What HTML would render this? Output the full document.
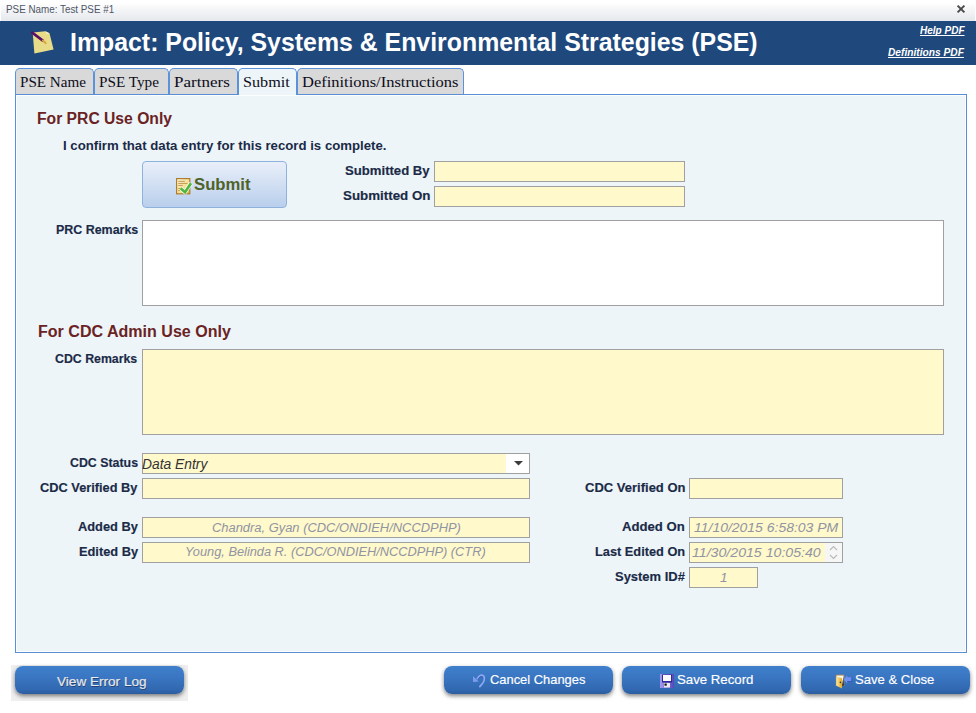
<!DOCTYPE html>
<html><head><meta charset="utf-8">
<style>
*{box-sizing:border-box;margin:0;padding:0}
html,body{width:976px;height:713px;overflow:hidden;background:#fff;font-family:"Liberation Sans",sans-serif}
.a{position:absolute}
.t{position:absolute;white-space:nowrap;transform-origin:0 0}
#titlebar{left:1px;top:0;width:974px;height:21px;background:linear-gradient(#fff 0,#fff 3px,#fafafb 6px,#e6e9ed 20px)}
#hdr{left:0;top:21px;width:976px;height:44px;background:#1f497d}
.tab{top:68px;height:26px;background:#d9d9d9;border:1px solid #5a93da;border-bottom:none;border-radius:5px 5px 0 0}
.tab.sel{background:#edf5f9;height:27px;z-index:3}
#panel{left:15px;top:94px;width:952px;height:559px;background:#edf5f9;border:1px solid #5b8fd3;box-shadow:inset 0 0 0 1px rgba(255,255,255,.75)}
.box{background:#fff9cc;border:1px solid #a0a0a0}
.btn{top:666px;height:28px;width:169px;border-radius:8px;background:linear-gradient(#3f7fcc 0,#3a76c2 40%,#3168b0 85%,#2b5c9e 100%);box-shadow:0 2px 4px rgba(0,0,0,.5)}
</style></head><body>
<div id="titlebar" class="a"></div>
<svg class="a" style="left:956px;top:4px" width="10" height="10" viewBox="0 0 10 10"><path d="M1.6 1.6L8.4 8.4M8.4 1.6L1.6 8.4" stroke="#4a4a4a" stroke-width="2"/></svg>

<div id="hdr" class="a"></div>
<svg class="a" style="left:30px;top:30px" width="26" height="26" viewBox="0 0 26 26">
  <path d="M2.7 2.6 L15.3 1.3 L19.5 3.3 L23.6 19.4 L4.4 23.6 Z" fill="#e9dc88"/>
  <path d="M15.3 1.3 L19.5 3.3 L16.5 4.2 Z" fill="#f4ecc0"/>
  <path d="M2.2 2.6 L12.8 10.6" stroke="#5a1068" stroke-width="2.6" stroke-linecap="round"/>
  <path d="M12.8 10.6 L15.8 13.2" stroke="#d9a540" stroke-width="2" stroke-linecap="round"/>
</svg>

<div id="panel" class="a"></div>
<div class="a tab" style="left:15px;width:79px"></div>
<div class="a tab" style="left:94px;width:75px"></div>
<div class="a tab" style="left:169px;width:69px"></div>
<div class="a tab sel" style="left:238px;width:59px"></div>
<div class="a tab" style="left:297px;width:167px"></div>

<div class="a" style="left:142px;top:161px;width:145px;height:47px;border:1px solid #8eb1de;border-radius:4px;background:linear-gradient(#e9eff9,#b9cfec)"></div>
<svg class="a" style="left:176px;top:178px" width="17" height="17" viewBox="0 0 17 17">
  <defs><linearGradient id="doc" x1="0" y1="0" x2="1" y2="1"><stop offset="0" stop-color="#fffbe6"/><stop offset=".6" stop-color="#f8dc90"/><stop offset="1" stop-color="#e0a838"/></linearGradient></defs>
  <rect x="0.6" y="0.6" width="13.2" height="15.2" fill="url(#doc)" stroke="#ad7d2a" stroke-width="1.2"/>
  <path d="M2.2 3.3h6.6M2.2 5.4h9.3M2.2 7.4h4.6M2.2 10.5h2M2.2 12.5h2" stroke="#c09a50" stroke-width="1"/>
  <path d="M4.6 10.3 L9 14.2 L15 5.2" stroke="#fff" stroke-width="4.2" fill="none" stroke-linejoin="round"/>
  <path d="M4.6 10.3 L9 14.2 L15 5.2" stroke="#4fb83c" stroke-width="2.8" fill="none"/>
</svg>

<div class="a box" style="left:434px;top:161px;width:251px;height:21px"></div>
<div class="a box" style="left:434px;top:186px;width:251px;height:21px"></div>
<div class="a box" style="left:142px;top:220px;width:802px;height:86px;background:#fff"></div>
<div class="a box" style="left:142px;top:349px;width:802px;height:86px"></div>

<div class="a box" style="left:142px;top:453px;width:388px;height:21px"></div>
<div class="a" style="left:506px;top:454px;width:23px;height:19px;background:#fff"></div>
<svg class="a" style="left:514px;top:461px" width="9" height="5" viewBox="0 0 9 5"><path d="M0 0H9L4.5 4.5Z" fill="#3c3c3c"/></svg>
<div class="a box" style="left:142px;top:478px;width:388px;height:21px"></div>
<div class="a box" style="left:142px;top:517px;width:388px;height:21px"></div>
<div class="a box" style="left:142px;top:542px;width:388px;height:21px"></div>

<div class="a box" style="left:689px;top:478px;width:154px;height:21px"></div>
<div class="a box" style="left:689px;top:517px;width:154px;height:21px"></div>
<div class="a box" style="left:689px;top:542px;width:154px;height:21px"></div>
<div class="a" style="left:825px;top:543px;width:17px;height:19px;background:#f6f6f6"></div>
<svg class="a" style="left:829px;top:545px" width="9" height="15" viewBox="0 0 9 15"><path d="M1 5L4.5 1.5L8 5M1 10L4.5 13.5L8 10" stroke="#bbb" stroke-width="1.2" fill="none"/></svg>
<div class="a box" style="left:689px;top:567px;width:69px;height:21px"></div>

<div class="a" style="left:11px;top:665px;width:177px;height:36px;background:#efefef"></div>
<div class="a btn" style="left:15px"></div>
<div class="a btn" style="left:444px"></div>
<div class="a btn" style="left:622px"></div>
<div class="a btn" style="left:801px"></div>

<svg class="a" style="left:470px;top:672px" width="18" height="18" viewBox="0 0 18 18">
  <path d="M7.3 6.6 Q10.5 1.2 13.8 4.2 Q16.2 8 9.8 14.6" stroke="#8ea8f2" stroke-width="1.7" fill="none" stroke-linecap="round"/>
  <path d="M8.2 6.8 Q10.5 3.6 13 5.2" stroke="#3a4aa8" stroke-width=".7" fill="none"/>
  <path d="M3 4.2 L3.1 9.9 L8.8 9.5 Z" fill="#7f9cf0"/>
</svg>
<svg class="a" style="left:660px;top:674px" width="14" height="14" viewBox="0 0 14 14">
  <defs><linearGradient id="fl" x1="0" x2="1"><stop offset="0" stop-color="#a79af0"/><stop offset="1" stop-color="#5546b8"/></linearGradient></defs>
  <rect x="0" y="0" width="14" height="14" fill="url(#fl)"/>
  <rect x="2" y="0.5" width="10" height="8" fill="#2f2a9a"/>
  <rect x="3" y="1" width="8" height="6" fill="#fafafa"/>
  <rect x="4" y="9" width="6" height="4.5" fill="#e8e8f0"/>
  <rect x="4.5" y="9.5" width="2.2" height="2.2" fill="#111"/>
</svg>
<svg class="a" style="left:832px;top:670px" width="24" height="22" viewBox="0 0 24 22">
  <defs><linearGradient id="dr" x1="0" x2="1"><stop offset="0" stop-color="#fbe9a0"/><stop offset="1" stop-color="#e0a828"/></linearGradient></defs>
  <rect x="4.2" y="5.1" width="7.7" height="10.6" fill="#f4f4f4" stroke="#b89048" stroke-width=".8"/>
  <path d="M11.4 6.5 L11.9 15.7 L10 15.7 Z" fill="#222"/>
  <path d="M4.4 6.6 L10 8.2 L10 18.6 L4.4 15.8 Z" fill="url(#dr)"/>
  <circle cx="8.4" cy="12.4" r=".8" fill="#333"/>
  <path d="M11.7 9.4 L15.2 5.2 L15.2 7.3 L19.8 7.3 L19.8 11.5 L15.2 11.5 L15.2 13.6 Z" fill="#6f92f2"/>
  <path d="M15.2 11.5 L19.8 11.5 L19.8 7.3" stroke="#2f50b0" stroke-width=".8" fill="none"/>
</svg>
<div class="t" style="left:5.51px;top:4.00px;font:normal 11px 'Liberation Sans',sans-serif;line-height:1;color:#4e5666;transform:scaleX(0.8950);">PSE Name: Test PSE #1</div>
<div class="t" style="left:70.31px;top:30.00px;font:bold 25px 'Liberation Sans',sans-serif;line-height:1;color:#fff;transform:scaleX(0.9945);">Impact: Policy, Systems &amp; Environmental Strategies (PSE)</div>
<div class="t" style="left:919.50px;top:25.00px;font:italic bold 11px 'Liberation Sans',sans-serif;line-height:1;color:#fff;transform:scaleX(0.9102);text-decoration:underline;text-decoration-skip-ink:none;">Help PDF</div>
<div class="t" style="left:888.10px;top:47.00px;font:italic bold 11px 'Liberation Sans',sans-serif;line-height:1;color:#fff;transform:scaleX(0.9268);text-decoration:underline;text-decoration-skip-ink:none;">Definitions PDF</div>
<div class="t" style="left:19.79px;top:75.00px;font:normal 15px 'Liberation Serif',serif;line-height:1;color:#0d0d1a;transform:scaleX(1.0078);z-index:5;">PSE Name</div>
<div class="t" style="left:98.99px;top:75.00px;font:normal 15px 'Liberation Serif',serif;line-height:1;color:#0d0d1a;transform:scaleX(1.0138);z-index:5;">PSE Type</div>
<div class="t" style="left:173.86px;top:75.00px;font:normal 15px 'Liberation Serif',serif;line-height:1;color:#0d0d1a;transform:scaleX(1.1354);z-index:5;">Partners</div>
<div class="t" style="left:242.62px;top:75.00px;font:normal 15px 'Liberation Serif',serif;line-height:1;color:#0d0d1a;transform:scaleX(1.0786);z-index:5;">Submit</div>
<div class="t" style="left:301.50px;top:75.00px;font:normal 15px 'Liberation Serif',serif;line-height:1;color:#0d0d1a;transform:scaleX(1.0979);z-index:5;">Definitions/Instructions</div>
<div class="t" style="left:37.22px;top:111.00px;font:bold 16px 'Liberation Sans',sans-serif;line-height:1;color:#6b2222;transform:scaleX(0.9796);">For PRC Use Only</div>
<div class="t" style="left:62.78px;top:139.00px;font:bold 13px 'Liberation Sans',sans-serif;line-height:1;color:#1b2a47;transform:scaleX(1.0155);">I confirm that data entry for this record is complete.</div>
<div class="t" style="left:194.39px;top:176.00px;font:bold 16.5px 'Liberation Sans',sans-serif;line-height:1;color:#4f6228;transform:scaleX(1.0109);">Submit</div>
<div class="t" style="left:345.33px;top:165.00px;font:bold 12.3px 'Liberation Sans',sans-serif;line-height:1;color:#1b2a47;transform:scaleX(1.0679);-webkit-text-stroke:.15px #1b2a47;">Submitted By</div>
<div class="t" style="left:342.62px;top:190.00px;font:bold 12.3px 'Liberation Sans',sans-serif;line-height:1;color:#1b2a47;transform:scaleX(1.0848);-webkit-text-stroke:.15px #1b2a47;">Submitted On</div>
<div class="t" style="left:55.69px;top:224.00px;font:bold 12.3px 'Liberation Sans',sans-serif;line-height:1;color:#1b2a47;transform:scaleX(1.0112);-webkit-text-stroke:.15px #1b2a47;">PRC Remarks</div>
<div class="t" style="left:37.60px;top:324.00px;font:bold 16px 'Liberation Sans',sans-serif;line-height:1;color:#6b2222;transform:scaleX(1.0031);">For CDC Admin Use Only</div>
<div class="t" style="left:54.90px;top:353.00px;font:bold 12.3px 'Liberation Sans',sans-serif;line-height:1;color:#1b2a47;transform:scaleX(1.0025);-webkit-text-stroke:.15px #1b2a47;">CDC Remarks</div>
<div class="t" style="left:69.89px;top:457.00px;font:bold 12.3px 'Liberation Sans',sans-serif;line-height:1;color:#1b2a47;transform:scaleX(1.0061);-webkit-text-stroke:.15px #1b2a47;">CDC Status</div>
<div class="t" style="left:40.46px;top:482.00px;font:bold 12.3px 'Liberation Sans',sans-serif;line-height:1;color:#1b2a47;transform:scaleX(1.0413);-webkit-text-stroke:.15px #1b2a47;">CDC Verified By</div>
<div class="t" style="left:77.76px;top:521.00px;font:bold 12.3px 'Liberation Sans',sans-serif;line-height:1;color:#1b2a47;transform:scaleX(1.0446);-webkit-text-stroke:.15px #1b2a47;">Added By</div>
<div class="t" style="left:78.96px;top:546.00px;font:bold 12.3px 'Liberation Sans',sans-serif;line-height:1;color:#1b2a47;transform:scaleX(1.0418);-webkit-text-stroke:.15px #1b2a47;">Edited By</div>
<div class="t" style="left:584.84px;top:482.00px;font:bold 12.3px 'Liberation Sans',sans-serif;line-height:1;color:#1b2a47;transform:scaleX(1.0581);-webkit-text-stroke:.15px #1b2a47;">CDC Verified On</div>
<div class="t" style="left:622.33px;top:521.00px;font:bold 12.3px 'Liberation Sans',sans-serif;line-height:1;color:#1b2a47;transform:scaleX(1.0684);-webkit-text-stroke:.15px #1b2a47;">Added On</div>
<div class="t" style="left:594.96px;top:546.00px;font:bold 12.3px 'Liberation Sans',sans-serif;line-height:1;color:#1b2a47;transform:scaleX(1.0388);-webkit-text-stroke:.15px #1b2a47;">Last Edited On</div>
<div class="t" style="left:614.75px;top:571.00px;font:bold 12.3px 'Liberation Sans',sans-serif;line-height:1;color:#1b2a47;transform:scaleX(1.0538);-webkit-text-stroke:.15px #1b2a47;">System ID#</div>
<div class="t" style="left:142.01px;top:457.00px;font:italic 14px 'Liberation Sans',sans-serif;line-height:1;color:#333;transform:scaleX(0.9879);">Data Entry</div>
<div class="t" style="left:211.75px;top:522.00px;font:italic 12.3px 'Liberation Sans',sans-serif;line-height:1;color:#9194a2;transform:scaleX(1.0498);">Chandra, Gyan (CDC/ONDIEH/NCCDPHP)</div>
<div class="t" style="left:185.32px;top:546.00px;font:italic 12.3px 'Liberation Sans',sans-serif;line-height:1;color:#9194a2;transform:scaleX(1.0402);">Young, Belinda R. (CDC/ONDIEH/NCCDPHP) (CTR)</div>
<div class="t" style="left:694.00px;top:522.00px;font:italic 12.3px 'Liberation Sans',sans-serif;line-height:1;color:#9194a2;transform:scaleX(1.1362);">11/10/2015 6:58:03 PM</div>
<div class="t" style="left:691.90px;top:547.00px;font:italic 12.3px 'Liberation Sans',sans-serif;line-height:1;color:#9194a2;transform:scaleX(1.1500);">11/30/2015 10:05:40</div>
<div class="t" style="left:720.20px;top:572.00px;font:italic 12.3px 'Liberation Sans',sans-serif;line-height:1;color:#9194a2;transform:scaleX(1.1000);">1</div>
<div class="t" style="left:57.20px;top:675.00px;font:normal 13px 'Liberation Sans',sans-serif;line-height:1;color:#ececec;transform:scaleX(1.0447);text-shadow:.6px .6px 0 rgba(20,30,60,.55);-webkit-text-stroke:.2px #e0e0e0;">View Error Log</div>
<div class="t" style="left:489.71px;top:673.00px;font:normal 13px 'Liberation Sans',sans-serif;line-height:1;color:#fff;transform:scaleX(0.9926);-webkit-text-stroke:.15px #fff;">Cancel Changes</div>
<div class="t" style="left:677.48px;top:673.00px;font:normal 13px 'Liberation Sans',sans-serif;line-height:1;color:#fff;transform:scaleX(1.0164);-webkit-text-stroke:.15px #fff;">Save Record</div>
<div class="t" style="left:854.79px;top:673.00px;font:normal 13px 'Liberation Sans',sans-serif;line-height:1;color:#fff;transform:scaleX(1.0065);-webkit-text-stroke:.15px #fff;">Save &amp; Close</div>
</body></html>
